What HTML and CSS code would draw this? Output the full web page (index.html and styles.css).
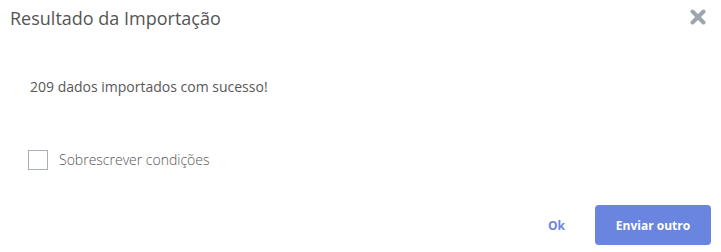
FILE: index.html
```html
<!DOCTYPE html>
<html lang="pt-BR">
<head>
    <meta charset="UTF-8">
    <meta name="viewport" content="width=device-width, initial-scale=1.0">
    <title>Resultado da Importação</title>
    <link rel="stylesheet" href="styles.css">
</head>
<body>
    <div class="modal">
        <div class="modal-header">
            <h2 class="modal-title">Resultado da Importação</h2>
            <button class="modal-close" aria-label="Fechar">
                <svg width="16" height="16" viewBox="0 0 16 16">
                    <path d="M2.5 2.5 L13.5 13.5 M13.5 2.5 L2.5 13.5" stroke="#9ea5af" stroke-width="4" stroke-linecap="round"/>
                </svg>
            </button>
        </div>

        <div class="modal-body">
            <p class="result-msg">209 dados importados com sucesso!</p>
            <label class="check-row">
                <input type="checkbox" class="check-input">
                <span class="check-box"></span>
                <span class="check-label">Sobrescrever condições</span>
            </label>
        </div>

        <div class="modal-footer">
            <button class="btn-link">Ok</button>
            <button class="btn-primary">Enviar outro</button>
        </div>
    </div>
</body>
</html>
```

FILE: styles.css
```css
body {
    margin: 0;
    background: #ffffff;
    font-family: "Open Sans", "Liberation Sans", sans-serif;
    color: #555555;
}

.modal {
    width: 721px;
    height: 252px;
    background: white;
}

/* Header */
.modal-header {
    display: flex;
    justify-content: space-between;
    align-items: flex-start;
    padding: 6px 15px 0 10px;
}

.modal-title {
    margin: 0;
    font-size: 18px;
    font-weight: 400;
    line-height: 24px;
    color: #555555;
}

.modal-close {
    border: none;
    background: transparent;
    padding: 0;
    margin-top: 3px;
    width: 16px;
    height: 16px;
    cursor: pointer;
}

.modal-close svg {
    display: block;
}

/* Body */
.modal-body {
    padding: 0 30px;
}

.result-msg {
    margin: 47px 0 0;
    font-size: 14px;
    line-height: 20px;
    color: #585858;
}

.check-row {
    display: flex;
    align-items: center;
    margin-top: 53px;
    margin-left: -2px;
    cursor: pointer;
}

.check-input {
    display: none;
}

.check-box {
    width: 18px;
    height: 18px;
    border: 1px solid #a9b0ba;
    background: white;
}

.check-label {
    margin-left: 11px;
    font-size: 14px;
    font-weight: 300;
    line-height: 20px;
    color: #555555;
}

/* Footer */
.modal-footer {
    display: flex;
    justify-content: flex-end;
    align-items: center;
    margin-top: 35px;
    padding-right: 10px;
}

.btn-link {
    border: none;
    background: transparent;
    padding: 0 16px;
    margin-right: 14px;
    height: 40px;
    font-family: inherit;
    font-size: 12px;
    font-weight: 700;
    color: #6a85e0;
    cursor: pointer;
}

.btn-primary {
    border: none;
    border-radius: 4px;
    background-color: #6a85e0;
    color: white;
    width: 116px;
    height: 40px;
    font-family: inherit;
    font-size: 12px;
    font-weight: 700;
    cursor: pointer;
}
```
